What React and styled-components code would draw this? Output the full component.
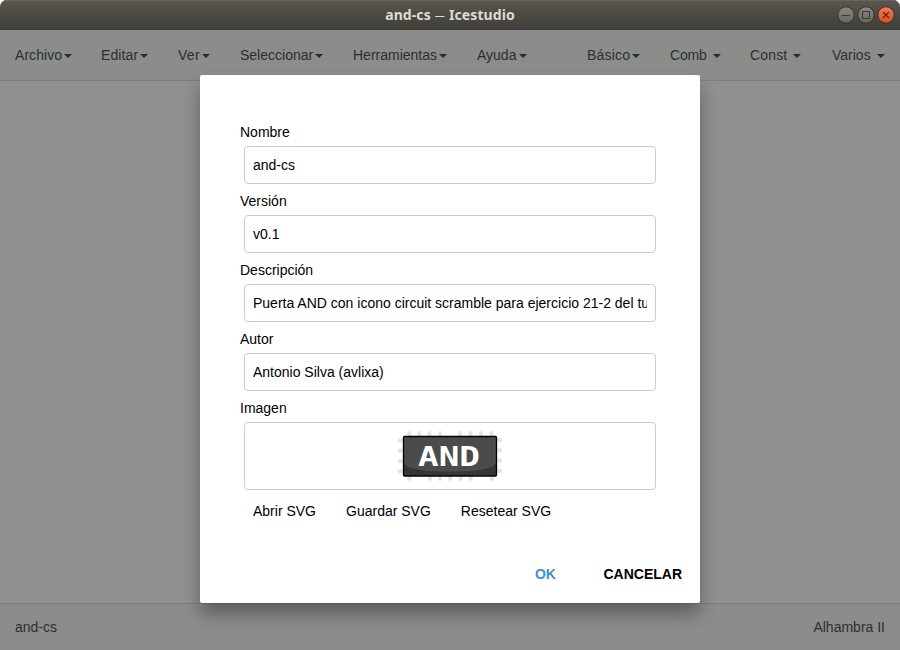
import React from "react";
import styled, { createGlobalStyle } from "styled-components";

const GlobalStyle = createGlobalStyle`
  * { box-sizing: border-box; }
  body { margin: 0; background: #fff; font: 14px/20px "Liberation Sans", Arial, sans-serif; }
`;

const Window = styled.div`
  position: relative;
  display: flex;
  flex-direction: column;
  width: 900px;
  height: 650px;
  overflow: hidden;
  border-radius: 7px 7px 0 0;
  background: #919090;
`;

const TitleBar = styled.header`
  display: grid;
  grid-template-columns: 1fr auto 1fr;
  align-items: center;
  flex: 0 0 30px;
  padding: 0 5px;
  background: linear-gradient(#5a574e, #3e3d38);
  box-shadow: inset 0 1px #66645b;
`;

const Title = styled.h1`
  display: flex;
  align-items: center;
  gap: 4px;
  grid-column: 2;
  margin: 0;
  color: #dfdbd2;
  font: bold 14px/20px "Noto Sans", sans-serif;
  letter-spacing: 0.1px;
`;

const Dash = styled.span`
  font-size: 10px;
  font-weight: 400;
`;

const WindowControls = styled.div`
  display: flex;
  justify-self: end;
  gap: 2px;
`;

const ControlIcon = styled.svg`
  display: block;
  width: 18px;
  height: 18px;
`;

const MenuBar = styled.nav`
  display: flex;
  justify-content: space-between;
  flex: 0 0 51px;
  padding: 15px 15px 0;
  background: #8b8d8b;
  border-bottom: 1px solid #7b807e;
`;

const MenuGroup = styled.div`
  display: flex;
`;

const MenuItem = styled.div`
  display: flex;
  align-items: center;
  height: 20px;
  width: ${(p) => p.$width}px;
  margin-right: ${(p) => p.$after}px;
  color: #2e2e2e;
`;

const MenuLabel = styled.span`
  flex: 1;
  letter-spacing: ${(p) => p.$spacing}px;
  white-space: nowrap;
`;

const Caret = styled.i`
  margin-top: 2px;
  border: 4px solid transparent;
  border-top-color: #2b2b2b;
  border-bottom: 0;
`;

const Canvas = styled.main`
  flex: 1;
`;

const StatusBar = styled.footer`
  display: flex;
  justify-content: space-between;
  flex: 0 0 47px;
  padding: 13px 15px 0;
  background: #8b8d8b;
  border-top: 1px solid #7b807e;
  color: #2e2e2e;
`;

const Dialog = styled.form`
  position: absolute;
  left: 200px;
  top: 75px;
  display: flex;
  flex-direction: column;
  width: 500px;
  height: 528px;
  padding: 47px 18px 0 40px;
  border-radius: 2px;
  background: #fff;
  box-shadow: 0 11px 17px rgba(0, 0, 0, 0.33);
  color: #000;
`;

const Field = styled.div`
  display: flex;
  flex-direction: column;
  width: 420px;
  height: 69px;
`;

const FieldLabel = styled.label`
  height: 24px;
`;

const TextInput = styled.input`
  width: 412px;
  height: 38px;
  margin: 0 4px;
  padding: 0 8px;
  border: 1px solid #ccc;
  border-radius: 4px;
  outline: 0;
  background: #fff;
  color: #000;
  font: inherit;
`;

const ImagePreview = styled.div`
  display: flex;
  align-items: center;
  justify-content: center;
  flex: 0 0 68px;
  width: 412px;
  margin: 0 4px;
  border: 1px solid #ccc;
  border-radius: 4px;
`;

const ImageActions = styled.div`
  display: flex;
  gap: 30px;
  margin: 11px 0 0 13px;
`;

const PlainButton = styled.button`
  padding: 0;
  border: 0;
  background: none;
  color: #000;
  font: inherit;
`;

const DialogActions = styled.div`
  display: flex;
  justify-content: flex-end;
  gap: 47.5px;
  margin-top: 43px;
`;

const ActionButton = styled(PlainButton)`
  color: ${(p) => (p.$primary ? "#3c92d2" : "#000")};
  font-weight: bold;
`;

const mainMenus = [
  ["Archivo", 57, 29, 0.05],
  ["Editar", 47, 30, 0.1],
  ["Ver", 32, 30, 0.3],
  ["Seleccionar", 83, 30, 0],
  ["Herramientas", 94, 30, 0],
  ["Ayuda", 50, 0, 0],
];

const blockMenus = [
  ["Básico", 53, 30, 0.2],
  ["Comb", 51, 29, -0.15],
  ["Const", 51, 31, 0.15],
  ["Varios", 53, 0, 0],
];

const fields = [
  ["Nombre", "and-cs"],
  ["Versión", "v0.1"],
  ["Descripción", "Puerta AND con icono circuit scramble para ejercicio 21-2 del tutorial"],
  ["Autor", "Antonio Silva (avlixa)"],
];

const Menus = ({ items }) => (
  <MenuGroup>
    {items.map(([label, width, after, spacing]) => (
      <MenuItem key={label} $width={width} $after={after}>
        <MenuLabel $spacing={spacing}>{label}</MenuLabel>
        <Caret />
      </MenuItem>
    ))}
  </MenuGroup>
);

const Control = ({ close, children }) => (
  <ControlIcon viewBox="0 0 18 18">
    <defs>
      <linearGradient id={close ? "closeFill" : "controlFill"} x2="0" y2="1">
        <stop stopColor={close ? "#f58057" : "#8b8982"} />
        <stop offset="1" stopColor={close ? "#df4a16" : "#67665f"} />
      </linearGradient>
    </defs>
    <circle cx="9" cy="9" r="8.2" fill={`url(#${close ? "closeFill" : "controlFill"})`} stroke="#33322e" />
    <g fill="none" stroke={close ? "#4b2518" : "#3b3a36"} strokeWidth="1.1">{children}</g>
  </ControlIcon>
);

const topPins = [12.3, 22.3, 32.5, 43, 63.2, 73.5, 84, 94.5];
const bottomPins = [12.3, 32.8, 43, 53.3, 63.5, 73.7, 94.8];
const sidePins = [10.5, 20.8, 31, 41.3];

const Chip = () => (
  <svg width="106" height="52" viewBox="0 0 106 52">
    <g stroke="#e4e4e4" strokeWidth="4" strokeLinecap="round">
      {topPins.map((x) => <path key={x} d={`M${x} 3v5`} />)}
      {bottomPins.map((x) => <path key={x} d={`M${x} 45v4`} />)}
      {sidePins.map((y) => <path key={y} d={`M2.7 ${y}h4M98 ${y - 0.5}h5.3`} />)}
    </g>
    <rect x="6.5" y="6.5" width="93" height="39.5" rx="1" fill="#4b4b4b" />
    <path d="M7 32Q10 41 53 41T99 32V45H7Z" fill="#353535" />
    <path d="M7 32Q10 41 53 41T99 32" fill="none" stroke="#585858" strokeWidth=".7" />
    <rect x="6.5" y="6.5" width="93" height="39.5" rx="1" fill="none" stroke="#000" strokeWidth="1.3" />
    <text x="21" y="35.5" textLength="62" lengthAdjust="spacingAndGlyphs" fill="#fff" fontFamily="DejaVu Sans Mono, monospace" fontWeight="bold" fontSize="26">AND</text>
  </svg>
);

export default function App() {
  return (
    <>
      <GlobalStyle />
      <Window>
        <TitleBar>
          <Title><span>and-cs</span><Dash>—</Dash><span>Icestudio</span></Title>
          <WindowControls>
            <Control><path d="M5 9.5h8" /></Control>
            <Control><path d="M5.5 5.5h7v7h-7z" /></Control>
            <Control close><path d="m6 6 6 6m0-6-6 6" /></Control>
          </WindowControls>
        </TitleBar>
        <MenuBar>
          <Menus items={mainMenus} />
          <Menus items={blockMenus} />
        </MenuBar>
        <Canvas />
        <StatusBar>
          <span>and-cs</span>
          <span>Alhambra II</span>
        </StatusBar>
        <Dialog>
          {fields.map(([label, value]) => (
            <Field key={label}>
              <FieldLabel htmlFor={label}>{label}</FieldLabel>
              <TextInput id={label} defaultValue={value} />
            </Field>
          ))}
          <FieldLabel as="div">Imagen</FieldLabel>
          <ImagePreview><Chip /></ImagePreview>
          <ImageActions>
            <PlainButton type="button">Abrir SVG</PlainButton>
            <PlainButton type="button">Guardar SVG</PlainButton>
            <PlainButton type="button">Resetear SVG</PlainButton>
          </ImageActions>
          <DialogActions>
            <ActionButton type="button" $primary>OK</ActionButton>
            <ActionButton type="button">CANCELAR</ActionButton>
          </DialogActions>
        </Dialog>
      </Window>
    </>
  );
}
